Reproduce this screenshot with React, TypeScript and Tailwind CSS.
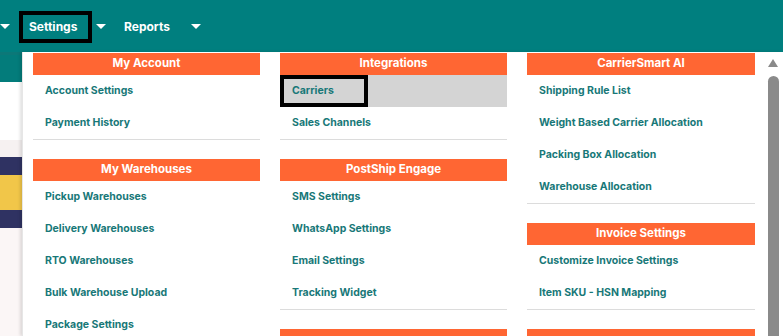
import React from 'react';

type Section = { title: string; items: string[] };

const columns: Section[][] = [
  [
    { title: 'My Account', items: ['Account Settings', 'Payment History'] },
    {
      title: 'My Warehouses',
      items: [
        'Pickup Warehouses',
        'Delivery Warehouses',
        'RTO Warehouses',
        'Bulk Warehouse Upload',
        'Package Settings',
      ],
    },
  ],
  [
    { title: 'Integrations', items: ['Carriers', 'Sales Channels'] },
    {
      title: 'PostShip Engage',
      items: ['SMS Settings', 'WhatsApp Settings', 'Email Settings', 'Tracking Widget'],
    },
    { title: '', items: [] },
  ],
  [
    {
      title: 'CarrierSmart AI',
      items: [
        'Shipping Rule List',
        'Weight Based Carrier Allocation',
        'Packing Box Allocation',
        'Warehouse Allocation',
      ],
    },
    { title: 'Invoice Settings', items: ['Customize Invoice Settings', 'Item SKU - HSN Mapping'] },
    { title: '', items: [] },
  ],
];

function Caret() {
  return (
    <span className="block w-0 h-0 border-l-[5px] border-r-[5px] border-t-[5px] border-l-transparent border-r-transparent border-t-white" />
  );
}

function MenuSection({ section }: { section: Section }) {
  return (
    <div className="mb-[19px]">
      <div className="h-[22px] flex items-center justify-center bg-[#ff6633] text-white text-[11.5px] font-bold">
        {section.title}
      </div>
      {section.items.map((item) => {
        const active = item === 'Carriers';
        return (
          <div
            key={item}
            className={active ? 'relative h-8 flex items-center px-3 bg-[#d4d4d4]' : 'h-8 flex items-center px-3'}
          >
            {active && <span className="absolute left-0 top-0 h-8 w-[88px] border-4 border-black" />}
            <span className="relative text-[10.5px] font-bold text-[#187878]">{item}</span>
          </div>
        );
      })}
      <div className="border-b border-[#dcdcdc]" />
    </div>
  );
}

export default function App() {
  return (
    <div className="h-[336px] w-[783px] overflow-hidden bg-white flex flex-col" style={{ fontFamily: 'Inter, "Liberation Sans", sans-serif' }}>
      <nav className="h-[52px] shrink-0 bg-[#007f7f] flex items-center text-white text-[12px] font-bold">
        <Caret />
        <div className="ml-[9px] mt-px h-8 w-[73px] border-4 border-black flex items-center pl-[6px]">Settings</div>
        <span className="ml-1">
          <Caret />
        </span>
        <span className="ml-[18px] mt-px">Reports</span>
        <span className="ml-[21px]">
          <Caret />
        </span>
      </nav>

      <div className="flex flex-1 min-h-0">
        <div className="w-[22px] shrink-0 flex flex-col bg-[#fbf6f6]">
          <div className="h-[3px] bg-[#0c7878]" />
          <div className="h-[27px] bg-[#037c7b]" />
          <div className="h-[58px] bg-white" />
          <div className="h-[17px] bg-[#f6f1f1]" />
          <div className="h-[18px] bg-[#2f3262]" />
          <div className="h-[35px] bg-[#f1c649]" />
          <div className="h-[18px] bg-[#2f3262]" />
        </div>

        <div className="flex-1 flex bg-white shadow-[-2px_0_3px_rgba(0,0,0,0.12)] border-l border-[#e6e6e6]">
          <div className="pl-[10px] pt-px flex gap-5">
            {columns.map((col, i) => (
              <div key={i} className={i === 2 ? 'w-[228px]' : 'w-[227px]'}>
                {col.map((s, j) => (
                  <MenuSection key={j} section={s} />
                ))}
              </div>
            ))}
          </div>

          <div className="ml-3 w-3 flex flex-col items-center pt-[7px]">
            <span className="block w-0 h-0 border-l-[5px] border-r-[5px] border-b-[8px] border-l-transparent border-r-transparent border-b-[#8a8a8a]" />
            <div className="mt-[9px] w-[11px] flex-1 rounded-t-full bg-[#8a8a8a]" />
          </div>
        </div>
      </div>
    </div>
  );
}
